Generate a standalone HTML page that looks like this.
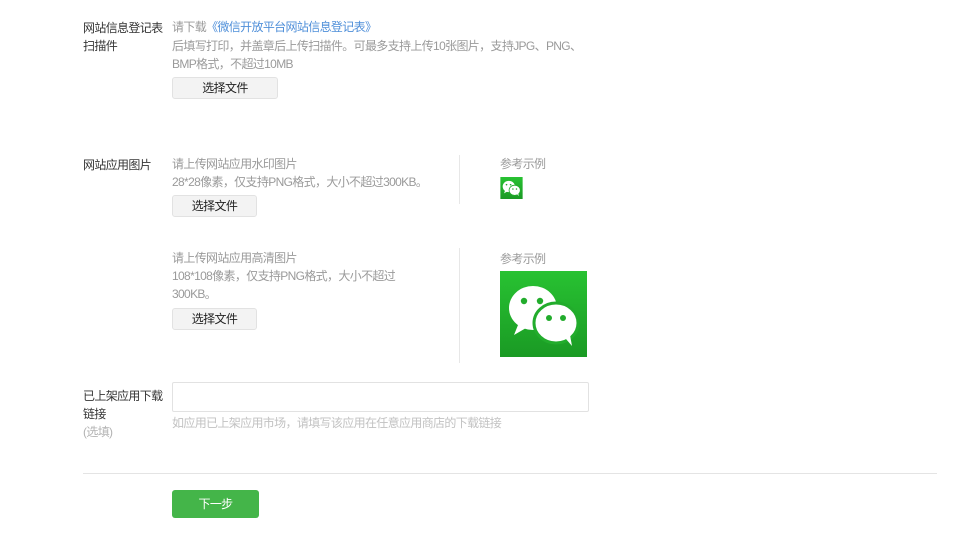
<!DOCTYPE html>
<html><head><meta charset="utf-8">
<style>
*{margin:0;padding:0;box-sizing:border-box}
body{width:973px;height:536px;background:#fff;position:relative;overflow:hidden;font-family:"Liberation Sans","Noto Sans CJK SC",sans-serif;font-size:12px;letter-spacing:-0.65px;line-height:18px;color:#353535}
.a{position:absolute;white-space:nowrap}
.g{color:#9a9a9a}
.btn{position:absolute;background:#f3f3f3;border:1px solid #e2e2e2;border-radius:3px;text-align:center;color:#222;line-height:20px;height:22px}
.vl{position:absolute;left:459px;width:1px;background:#e7e7e7}
</style></head><body>
<div class="a" style="left:83px;top:19px">网站信息登记表</div>
<div class="a" style="left:83px;top:37px">扫描件</div>
<div class="a g" style="left:172px;top:18px">请下载<span style="color:#4f8fd9">《微信开放平台网站信息登记表》</span></div>
<div class="a g" style="left:172px;top:37px">后填写打印，并盖章后上传扫描件。可最多支持上传10张图片，支持JPG、PNG、</div>
<div class="a g" style="left:172px;top:55px">BMP格式，不超过10MB</div>
<div class="btn" style="left:172px;top:77px;width:106px">选择文件</div>

<div class="a" style="left:83px;top:156px">网站应用图片</div>
<div class="a g" style="left:172px;top:155px">请上传网站应用水印图片</div>
<div class="a g" style="left:172px;top:173px">28*28像素，仅支持PNG格式，大小不超过300KB。</div>
<div class="btn" style="left:172px;top:195px;width:85px">选择文件</div>
<div class="vl" style="top:155px;height:49px"></div>
<div class="a g" style="left:500px;top:155px">参考示例</div>
<svg style="position:absolute;left:500px;top:177px" width="23" height="22" viewBox="0 0 87 86">
<defs><linearGradient id="gg" x1="0" y1="0" x2="0" y2="1"><stop offset="0" stop-color="#28c232"/><stop offset="1" stop-color="#1a9a24"/></linearGradient></defs>
<rect width="87" height="86" fill="url(#gg)"/>
<ellipse cx="33" cy="37" rx="24" ry="22" fill="#fff"/><path d="M18 54 L14 64 L26 57Z" fill="#fff"/>
<ellipse cx="56" cy="52" rx="22" ry="20" fill="#fff" stroke="#22ac2c" stroke-width="3"/><path d="M66 68 L72 75 L70 64Z" fill="#fff"/>
<circle cx="24" cy="30" r="3.2" fill="#22ac2c"/><circle cx="40" cy="30" r="3.2" fill="#22ac2c"/>
<circle cx="49" cy="47" r="3" fill="#22ac2c"/><circle cx="63" cy="47" r="3" fill="#22ac2c"/>
</svg>

<div class="a g" style="left:172px;top:249px">请上传网站应用高清图片</div>
<div class="a g" style="left:172px;top:267px">108*108像素，仅支持PNG格式，大小不超过</div>
<div class="a g" style="left:172px;top:285px">300KB。</div>
<div class="btn" style="left:172px;top:308px;width:85px">选择文件</div>
<div class="vl" style="top:248px;height:115px"></div>
<div class="a g" style="left:500px;top:250px">参考示例</div>
<svg style="position:absolute;left:500px;top:271px" width="87" height="86" viewBox="0 0 87 86">
<rect width="87" height="86" fill="url(#gg)"/>
<ellipse cx="33" cy="37" rx="24" ry="22" fill="#fff"/><path d="M18 54 L14 64 L26 57Z" fill="#fff"/>
<ellipse cx="56" cy="52" rx="22" ry="20" fill="#fff" stroke="#22ac2c" stroke-width="3"/><path d="M66 68 L72 75 L70 64Z" fill="#fff"/>
<circle cx="24" cy="30" r="3.2" fill="#22ac2c"/><circle cx="40" cy="30" r="3.2" fill="#22ac2c"/>
<circle cx="49" cy="47" r="3" fill="#22ac2c"/><circle cx="63" cy="47" r="3" fill="#22ac2c"/>
</svg>

<div class="a" style="left:83px;top:387px">已上架应用下载</div>
<div class="a" style="left:83px;top:405px">链接</div>
<div class="a" style="left:83px;top:423px;color:#b2b2b2">(选填)</div>
<div style="position:absolute;left:172px;top:382px;width:417px;height:30px;border:1px solid #e2e2e2;border-radius:2px"></div>
<div class="a" style="left:172px;top:414px;color:#c2c2c2">如应用已上架应用市场，请填写该应用在任意应用商店的下载链接</div>

<div style="position:absolute;left:83px;top:473px;width:854px;height:1px;background:#e4e4e4"></div>
<div style="position:absolute;left:172px;top:490px;width:87px;height:28px;background:#44b549;border-radius:3px;color:#fff;text-align:center;line-height:28px">下一步</div>
</body></html>
